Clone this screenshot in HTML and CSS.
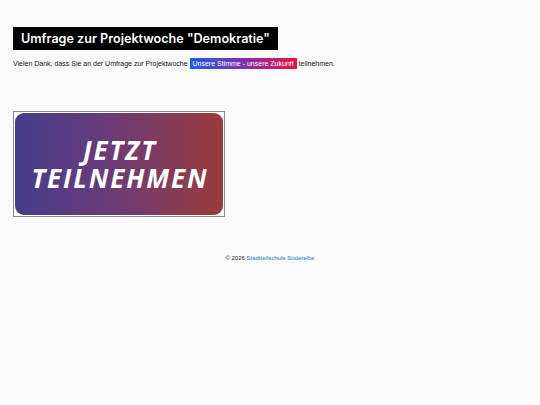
FILE: index.html
```html
<!DOCTYPE html>
<html lang="de">
<head>
<meta charset="utf-8">
<title>Umfrage</title>
<link rel="stylesheet" href="styles.css">
</head>
<body>
<main class="page">
  <h1 class="title">Umfrage zur Projektwoche "Demokratie"</h1>
  <p class="intro">Vielen Dank, dass Sie an der Umfrage zur Projektwoche <span class="badge">Unsere Stimme - unsere Zukunft</span> teilnehmen.</p>
  <a class="cta-frame" href="#">
    <span class="cta"><span class="cta-text"><span class="cta-line">JETZT</span><span class="cta-line">TEILNEHMEN</span></span></span>
  </a>
</main>
<footer class="footer">© 2026 <a class="footer-link" href="#">Stadtteilschule Süderelbe</a></footer>
</body>
</html>
```
FILE: styles.css
```css
html, body { margin: 0; padding: 0; }
body {
  background: #fafafa;
  font-family: "Liberation Sans", Arial, sans-serif;
  color: #111;
}
.page {
  padding: 27px 13px 0 13px;
}
.title {
  display: inline-block;
  margin: 0;
  background: #000;
  color: #fff;
  font-family: Inter, sans-serif;
  font-weight: 600;
  font-size: 12.6px;
  line-height: 23px;
  padding: 0 8px;
}
.intro {
  margin: 8px 0 0 0;
  font-size: 7px;
  line-height: 11px;
}
.badge {
  background: linear-gradient(90deg, #1b5fe6, #8e2aa6 55%, #e8143f);
  color: #fff;
  padding: 2px 3px;
}
.cta-frame {
  display: flex;
  margin-top: 42px;
  border: 1px solid #8a8a8a;
  background: #fff;
  padding: 1px;
  box-sizing: border-box;
  text-decoration: none;
  width: 212px;
  height: 106px;
}
.cta {
  flex: 1;
  display: flex;
  align-items: center;
  justify-content: center;
  border-radius: 9px;
  background: linear-gradient(90deg, #453d8b, #6a3b78 45%, #9b3b3a);
}
.cta-text {
  display: flex;
  flex-direction: column;
  align-items: center;
  gap: 1px;
  color: #fff;
  font-family: "Open Sans", sans-serif;
  font-weight: 700;
  font-style: italic;
  font-size: 26px;
  line-height: 27px;
  letter-spacing: 1.9px;
  padding-top: 1px;
  padding-left: 2px;
}
.cta-line {
  display: block;
}
.footer {
  text-align: center;
  margin-top: 38px;
  font-size: 6px;
  color: #222;
}
.footer-link {
  color: #2a6fd6;
  text-decoration-thickness: 0.6px;
}
```
